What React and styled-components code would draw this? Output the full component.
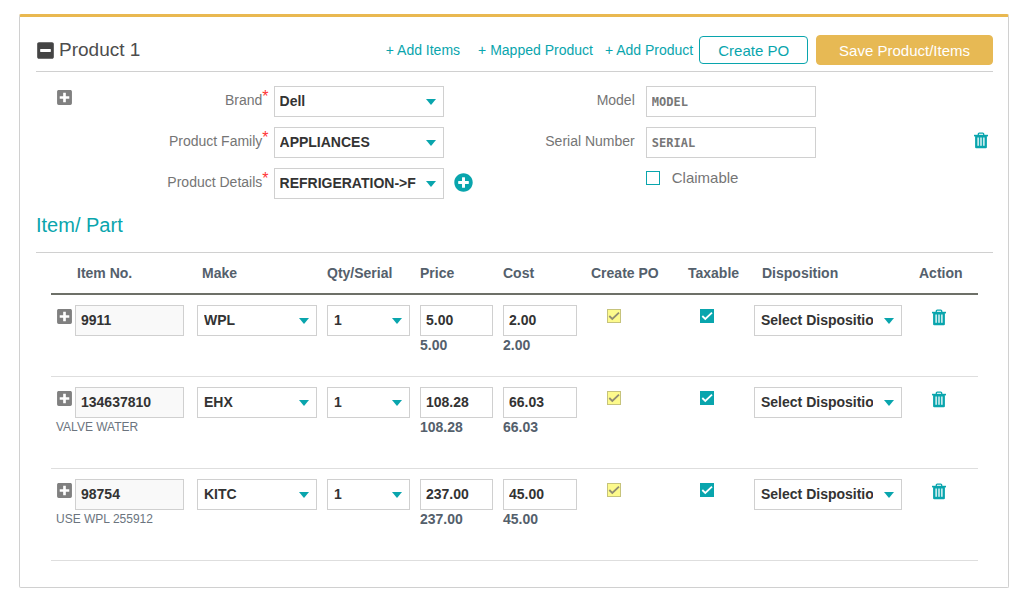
import React from "react";
import styled, { createGlobalStyle, css } from "styled-components";
import { FaMinusSquare, FaPlusCircle, FaPlusSquare } from "react-icons/fa";

const teal = "#09a5ad";
const line = "#d0d0d0";

const GlobalStyle = createGlobalStyle`
  *, *::before, *::after { box-sizing: border-box; }
  body {
    margin: 0;
    background: #fff;
    color: #54606c;
    font-family: "Liberation Sans", Arial, sans-serif;
    font-size: 14px;
  }
`;

const Page = styled.main`
  padding: 14px 15px 9px 19px;
`;

const Card = styled.section`
  border: 1px solid ${line};
  border-top: 3px solid #e9b850;
  border-radius: 2px;
  padding: 18px 15px 26px 16px;
`;

const Header = styled.header`
  display: flex;
  align-items: center;
  padding-bottom: 6px;
  border-bottom: 1px solid ${line};
`;

const Title = styled.h1`
  margin: 0;
  flex: 1;
  font-size: 19px;
  font-weight: 400;
  line-height: 32px;
  color: #4d4d4d;
`;

const IconButton = styled.button`
  display: inline-flex;
  flex: none;
  padding: 0;
  border: 0;
  background: none;
  color: ${(p) => p.$color || teal};
  font-size: ${(p) => p.$size || 16}px;
  cursor: pointer;
`;

const TitleRow = styled.div`
  display: flex;
  flex: 1;
  align-items: center;
  gap: 4px;
  height: 30px;
`;

const Actions = styled.nav`
  display: flex;
  align-items: center;
`;

const ActionLink = styled.a`
  color: ${teal};
  font-size: 14px;
  line-height: 30px;
  margin-right: ${(p) => p.$gap}px;
  text-decoration: none;
  white-space: nowrap;
`;

const Button = styled.button`
  height: ${(p) => (p.$primary ? 30 : 28)}px;
  padding: 0 ${(p) => (p.$primary ? 22 : 18)}px;
  border: 1px solid ${(p) => (p.$primary ? "#e7b954" : teal)};
  border-radius: 4px;
  background: ${(p) => (p.$primary ? "#e7b954" : "#fff")};
  color: ${(p) => (p.$primary ? "#fff" : teal)};
  font: 15px "Liberation Sans", Arial, sans-serif;
  white-space: nowrap;
  & + & { margin-left: 8px; }
`;

const Details = styled.form`
  display: flex;
  align-items: flex-start;
  padding: 14px 5px 0 20px;
`;

const DetailsToggle = styled.div`
  display: flex;
  padding-top: 3px;
`;

const FieldGrid = styled.div`
  flex: 1;
  display: grid;
  grid-template-columns: 201fr 171fr 36px 166fr 171fr 172fr;
  grid-auto-rows: 31px;
  row-gap: 10px;
  align-items: center;
`;

const Label = styled.label`
  justify-self: end;
  grid-column: ${(p) => p.$col};
  padding: 0 ${(p) => (p.$required ? 5 : 11)}px 4px 0;
  color: #757575;
  font-size: 14px;
  line-height: 16px;
  white-space: nowrap;
`;

const Star = styled.span`
  color: #f33;
  font-size: 16px;
  line-height: 0;
  vertical-align: 3px;
`;

const control = css`
  width: 100%;
  min-width: 0;
  height: 31px;
  margin: 0;
  padding: 0 5px 2px;
  border: 1px solid ${line};
  border-radius: 0;
  background: #fff;
  color: #333;
  font: bold 14px "Liberation Sans", Arial, sans-serif;
`;

const TextInput = styled.input`
  ${control}
  &:read-only { background: #f9f9f9; }
  &::placeholder {
    color: #777;
    opacity: 1;
    font: bold 12px "DejaVu Sans Mono", monospace;
  }
`;

const SelectBox = styled.span`
  display: grid;
  align-items: center;
  &::after {
    content: "";
    grid-area: 1 / 1;
    justify-self: end;
    margin: 1px 8px 0 0;
    border: 5px solid transparent;
    border-top: 6px solid ${teal};
    border-bottom: 0;
    pointer-events: none;
  }
`;

const NativeSelect = styled.select`
  ${control}
  grid-area: 1 / 1;
  appearance: none;
  padding-left: ${(p) => (p.$inset ? 6 : 5)}px;
  padding-right: ${(p) => (p.$inset ? 28 : 26)}px;
`;

const AddDetail = styled.div`
  display: flex;
  padding: 0 0 2px 10px;
`;

const RemoveProduct = styled.div`
  grid-column: 6;
  grid-row: 2;
  display: flex;
  justify-self: end;
  padding-bottom: 5px;
`;

const CheckLabel = styled.label`
  grid-column: 5;
  display: flex;
  align-items: center;
  gap: 12px;
  padding-bottom: 11px;
  color: #757575;
  font-size: 15px;
  line-height: 20px;
`;

const CheckFrame = styled.span`
  display: inline-grid;
  width: 14px;
  height: 14px;
  svg {
    grid-area: 1 / 1;
    pointer-events: none;
    display: none;
  }
  input:checked + svg { display: block; }
`;

const CheckInput = styled.input`
  grid-area: 1 / 1;
  appearance: none;
  width: 14px;
  height: 14px;
  margin: 0;
  border: 1px solid ${teal};
  background: #fff;
  &:checked { background: ${teal}; }
  &:checked:disabled { background: #fdfa8c; border-color: #c6c37c; }
`;

const SectionTitle = styled.h2`
  margin: 0;
  padding: 13px 0 14px;
  border-bottom: 1px solid ${line};
  color: ${teal};
  font-size: 20px;
  font-weight: 400;
  line-height: 26px;
`;

const TableArea = styled.div`
  padding: 0 15px;
`;

const Table = styled.table`
  width: 100%;
  table-layout: fixed;
  border-spacing: 0;
`;

const Col = styled.col`
  width: ${(p) => p.$w}px;
`;

const Th = styled.th`
  height: 42px;
  padding: 0 0 0 ${(p) => p.$pad}px;
  border-bottom: 2px solid #6d7068;
  text-align: left;
  font-size: 14px;
  white-space: nowrap;
`;

const Td = styled.td`
  padding: 10px 5px 22px ${(p) => p.$pad || 5}px;
  border-bottom: 1px solid #dedede;
  vertical-align: top;
`;

const IconCell = styled.div`
  display: flex;
  padding-top: 4px;
`;

const ItemToggle = styled.div`
  display: flex;
  padding-top: 3px;
`;

const ItemNumber = styled.div`
  display: flex;
  align-items: flex-start;
  gap: 2px;
  padding-right: 3px;
`;

const Description = styled.p`
  margin: 0 0 10px;
  font-size: 12px;
  line-height: 18px;
  color: #6b747e;
  white-space: nowrap;
`;

const Amount = styled.div`
  font-weight: 700;
  line-height: 18px;
`;

function Checkbox({ tick = "#fff", ...rest }) {
  return (
    <CheckFrame>
      <CheckInput type="checkbox" {...rest} />
      <svg width="14" height="14" viewBox="0 0 14 14" fill="none" stroke={tick} strokeWidth="1.8">
        <path d="M2.3 7 5.3 10 12 3.6" />
      </svg>
    </CheckFrame>
  );
}

function Select({ id, label, value, inset }) {
  return (
    <SelectBox>
      <NativeSelect id={id} aria-label={label} defaultValue={value} $inset={inset}>
        <option>{value}</option>
      </NativeSelect>
    </SelectBox>
  );
}

function TrashIcon() {
  return (
    <svg width="14" height="17" viewBox="0 0 14 17" fill="none" stroke={teal}>
      <path d="M4.3 3V2Q4.3 1.1 5.2 1.1H8.8Q9.7 1.1 9.7 2V3" strokeWidth="1.3" />
      <path d="M0 3.6H14" strokeWidth="1.6" />
      <path d="M2.2 4.5V15.2H11.8V4.5Z" fill="#c4eaec" strokeWidth="2.2" strokeLinejoin="round" />
      <path d="M5.6 5V15M8.4 5V15" strokeWidth="1.1" />
      <path d="M2 14.8H12" strokeWidth="2" />
    </svg>
  );
}

const columns = [
  { name: "Item No.", width: 141, pad: 26 },
  { name: "Make", width: 130, pad: 10 },
  { name: "Qty/Serial", width: 93, pad: 5 },
  { name: "Price", width: 83, pad: 5 },
  { name: "Cost", width: 84, pad: 5 },
  { name: "Create PO", width: 101, pad: 9 },
  { name: "Taxable", width: 66, pad: 5 },
  { name: "Disposition", width: 158, pad: 13 },
  { name: "Action", width: 71, pad: 12 },
];

const items = [
  { no: "9911", make: "WPL", price: "5.00", cost: "2.00" },
  { no: "134637810", note: "VALVE WATER", make: "EHX", price: "108.28", cost: "66.03" },
  { no: "98754", note: "USE WPL 255912", make: "KITC", price: "237.00", cost: "45.00" },
];

function ItemRow({ item }) {
  return (
    <tr>
      <Td>
        <ItemNumber>
          <ItemToggle>
            <IconButton $color="#808080" $size={17} aria-label="Expand item"><FaPlusSquare /></IconButton>
          </ItemToggle>
          <TextInput aria-label="Item No." defaultValue={item.no} readOnly />
        </ItemNumber>
        {item.note && <Description>{item.note}</Description>}
      </Td>
      <Td><Select label="Make" value={item.make} inset /></Td>
      <Td><Select label="Qty/Serial" value="1" inset /></Td>
      <Td>
        <TextInput aria-label="Price" defaultValue={item.price} />
        <Amount>{item.price}</Amount>
      </Td>
      <Td>
        <TextInput aria-label="Cost" defaultValue={item.cost} />
        <Amount>{item.cost}</Amount>
      </Td>
      <Td $pad={25}>
        <IconCell><Checkbox aria-label="Create PO" tick="#918c72" defaultChecked disabled /></IconCell>
      </Td>
      <Td $pad={17}>
        <IconCell><Checkbox aria-label="Taxable" defaultChecked /></IconCell>
      </Td>
      <Td><Select label="Disposition" value="Select Disposition" inset /></Td>
      <Td $pad={25}>
        <IconCell><IconButton aria-label="Delete item"><TrashIcon /></IconButton></IconCell>
      </Td>
    </tr>
  );
}

export default function App() {
  return (
    <Page>
      <GlobalStyle />
      <Card>
        <Header>
          <TitleRow>
            <IconButton $color="#444" $size={19} aria-label="Collapse product"><FaMinusSquare /></IconButton>
            <Title>Product 1</Title>
          </TitleRow>
          <Actions>
            <ActionLink href="#items" $gap={18}>+ Add Items</ActionLink>
            <ActionLink href="#mapped" $gap={12}>+ Mapped Product</ActionLink>
            <ActionLink href="#product" $gap={6}>+ Add Product</ActionLink>
            <Button type="button">Create PO</Button>
            <Button type="button" $primary>Save Product/Items</Button>
          </Actions>
        </Header>

        <Details>
          <DetailsToggle>
            <IconButton type="button" $color="#808080" $size={17} aria-label="Expand details"><FaPlusSquare /></IconButton>
          </DetailsToggle>
          <FieldGrid>
            <Label htmlFor="brand" $col={1} $required>Brand<Star>*</Star></Label>
            <Select id="brand" value="Dell" />
            <Label htmlFor="model" $col={4}>Model</Label>
            <TextInput id="model" placeholder="MODEL" />

            <Label htmlFor="family" $col={1} $required>Product Family<Star>*</Star></Label>
            <Select id="family" value="APPLIANCES" />
            <Label htmlFor="serial" $col={4}>Serial Number</Label>
            <TextInput id="serial" placeholder="SERIAL" />
            <RemoveProduct>
              <IconButton type="button" aria-label="Delete product"><TrashIcon /></IconButton>
            </RemoveProduct>

            <Label htmlFor="details" $col={1} $required>Product Details<Star>*</Star></Label>
            <Select id="details" value="REFRIGERATION->F" />
            <AddDetail>
              <IconButton type="button" $size={19} aria-label="Add product details"><FaPlusCircle /></IconButton>
            </AddDetail>
            <CheckLabel><Checkbox />Claimable</CheckLabel>
          </FieldGrid>
        </Details>

        <SectionTitle id="items">Item/ Part</SectionTitle>
        <TableArea>
          <Table>
            <colgroup>
              {columns.map((c) => <Col key={c.name} $w={c.width} />)}
            </colgroup>
            <thead>
              <tr>{columns.map((c) => <Th key={c.name} scope="col" $pad={c.pad}>{c.name}</Th>)}</tr>
            </thead>
            <tbody>
              {items.map((item) => <ItemRow key={item.no} item={item} />)}
            </tbody>
          </Table>
        </TableArea>
      </Card>
    </Page>
  );
}
